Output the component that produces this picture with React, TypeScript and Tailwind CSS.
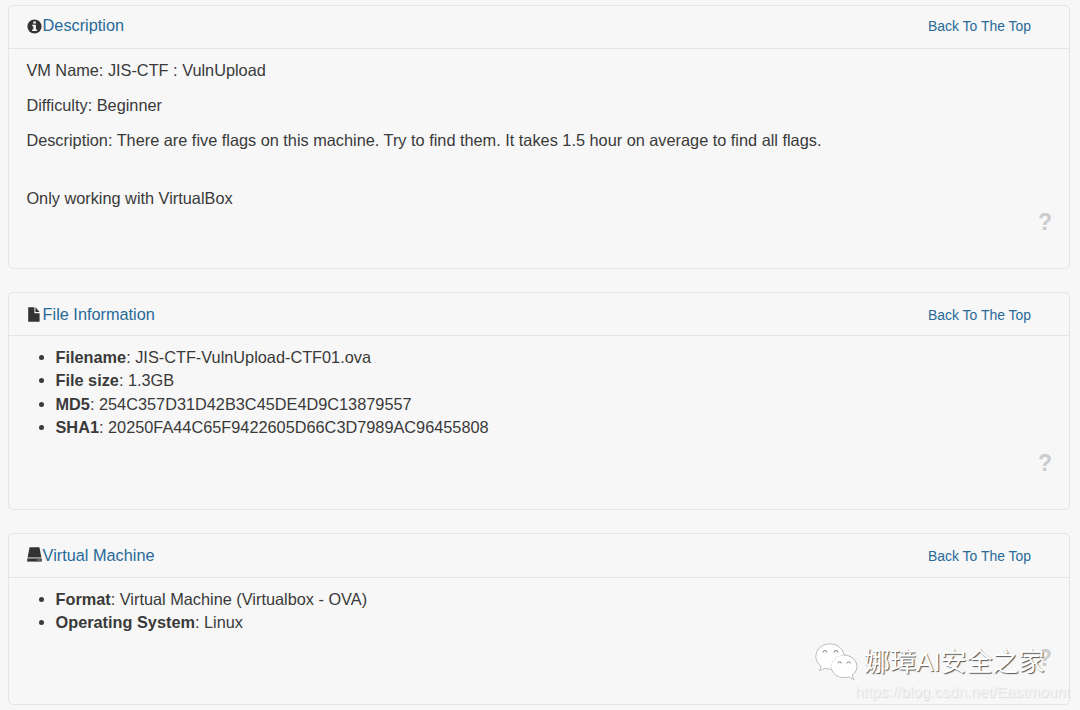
import type { ReactNode } from "react";

function InfoIcon() {
  return (
    <svg className="mt-[2px] size-[15px]" viewBox="0 0 15 15">
      <circle cx="7.5" cy="7.5" r="7.1" fill="#333" />
      <path d="M6.3 2.5h2.6v1.9H6.3zM5.2 5.8h3.7v4.7h1.2v1.6H5.1v-1.6h1.2V7.3H5.2z" fill="#f7f7f7" />
    </svg>
  );
}

function FileIcon() {
  return (
    <svg className="size-[15px]" viewBox="0 0 15 15" fill="#333">
      <path d="M1.2.3H7.4v5.9h5.2v8.5H1.2z" />
      <path d="M8.4.3l4.2 4.7H8.4z" />
    </svg>
  );
}

function DriveIcon() {
  return (
    <svg className="size-[15px]" viewBox="0 0 15 15">
      <path d="M2.6.3h9.8l2 10.2H.6z" fill="#333" />
      <path d="M.2 11.4h14.6v3.2H.2z" fill="#333" />
      <path d="M10.4 12.5h1v1h-1zM12.4 12.5h1v1h-1z" fill="#ddd" />
    </svg>
  );
}

function Panel({ icon, title, className, headerClass, children, bodyClass }: {
  icon: ReactNode; title: string; className: string; headerClass: string; bodyClass: string; children: ReactNode;
}) {
  return (
    <section className={`relative flex w-[1062px] shrink-0 flex-col rounded-[5px] border border-[#e5e5e5] bg-[#f7f7f7] ${className}`}>
      <header className={`flex shrink-0 items-center justify-between border-b border-[#e5e5e5] pr-[38px] pl-[18px] ${headerClass}`}>
        <div className="flex items-center">
          {icon}
          <h2 className="pl-[0.6px] text-[16.3px] leading-[22px] text-[#286a98]">{title}</h2>
        </div>
        <a className="pt-0.5 text-[13.95px] leading-[20px] text-[#286a98]">Back To The Top</a>
      </header>
      <div className={`text-[16.31px] leading-[23.3px] ${bodyClass}`}>{children}</div>
    </section>
  );
}

function Details({ rows }: { rows: [string, string][] }) {
  return (
    <ul className="list-disc pl-[46.5px]">
      {rows.map(([name, value]) => (
        <li key={name}><strong>{name}</strong>: {value}</li>
      ))}
    </ul>
  );
}

function Help({ className }: { className: string }) {
  return <span className={`absolute right-[17px] text-[23px] leading-[28px] font-bold text-[#ccc] ${className}`}>?</span>;
}

function WeChat() {
  return (
    <svg className="h-[38px] w-[44px] shrink-0 drop-shadow-[0.7px_0.7px_0.5px_#555]" viewBox="0 0 44 38" fill="#fff" stroke="#ccc" strokeWidth=".5">
      <path d="M16 1C8 1 2 6.4 2 13.5c0 4 2 7.4 5.3 9.7L5.8 27.5l5-2.3c1.7.5 3.4.7 5.2.7 8 0 14-5.2 14-12.2S24 1 16 1z" />
      <path d="M30 12.2c-7 0-12.6 4.9-12.6 11.2S23 34.5 30 34.5c1.7 0 3.3-.3 4.8-.8l4.8 2.7-1.5-4.4c2.9-2 4.7-5 4.7-8.5 0-6.3-5.8-11.3-12.8-11.3z" />
      <path d="M9 9.5a2 2 0 0 1 4 0M20 9.5a2 2 0 0 1 4 0M24 20.5a1.7 1.7 0 0 1 3.4 0M33 20.5a1.7 1.7 0 0 1 3.4 0" fill="none" stroke="#777" strokeWidth=".9" />
    </svg>
  );
}

export default function App() {
  return (
    <main className="relative flex h-[710px] w-[1080px] flex-col overflow-hidden bg-[#f7f7f7] pt-[5px] pl-2 font-['Liberation_Sans',Arial,sans-serif] text-[#3a3a3a]">
      <Panel icon={<InfoIcon />} title="Description" className="mb-[23px] h-[264px]" headerClass="h-[43px] pb-[4px]" bodyClass="pt-[10px] pl-[17.4px]">
        <p className="mb-[11.7px]">VM Name: JIS-CTF : VulnUpload</p>
        <p className="mb-[11.7px]">Difficulty: Beginner</p>
        <p className="mb-[35px]">Description: There are five flags on this machine. Try to find them. It takes 1.5 hour on average to find all flags.</p>
        <p>Only working with VirtualBox</p>
        <Help className="top-[202px]" />
      </Panel>
      <Panel icon={<FileIcon />} title="File Information" className="mb-[23px] h-[218px]" headerClass="h-[43px]" bodyClass="pt-[10.2px]">
        <Details rows={[
          ["Filename", "JIS-CTF-VulnUpload-CTF01.ova"],
          ["File size", "1.3GB"],
          ["MD5", "254C357D31D42B3C45DE4D9C13879557"],
          ["SHA1", "20250FA44C65F9422605D66C3D7989AC96455808"],
        ]} />
        <Help className="top-[156px]" />
      </Panel>
      <Panel icon={<DriveIcon />} title="Virtual Machine" className="h-[172px]" headerClass="h-[44px] pb-[2px]" bodyClass="pt-[10px]">
        <Details rows={[["Format", "Virtual Machine (Virtualbox - OVA)"], ["Operating System", "Linux"]]} />
        <Help className="top-[110px]" />
      </Panel>
      <div className="absolute top-[643px] left-[814px] flex items-center">
        <WeChat />
        <span className="ml-[6px] font-['Liberation_Sans','Noto_Sans_CJK_SC',sans-serif] text-[26px] leading-[38px] whitespace-nowrap text-white [text-shadow:1px_1px_1px_#555]">娜璋AI安全之家</span>
      </div>
      <span className="absolute top-[682px] left-[855px] text-[15.35px] leading-[20px] whitespace-nowrap text-[#f4f4f4] [text-shadow:1px_1px_1px_#dadada]">https://blog.csdn.net/Eastmount</span>
    </main>
  );
}
